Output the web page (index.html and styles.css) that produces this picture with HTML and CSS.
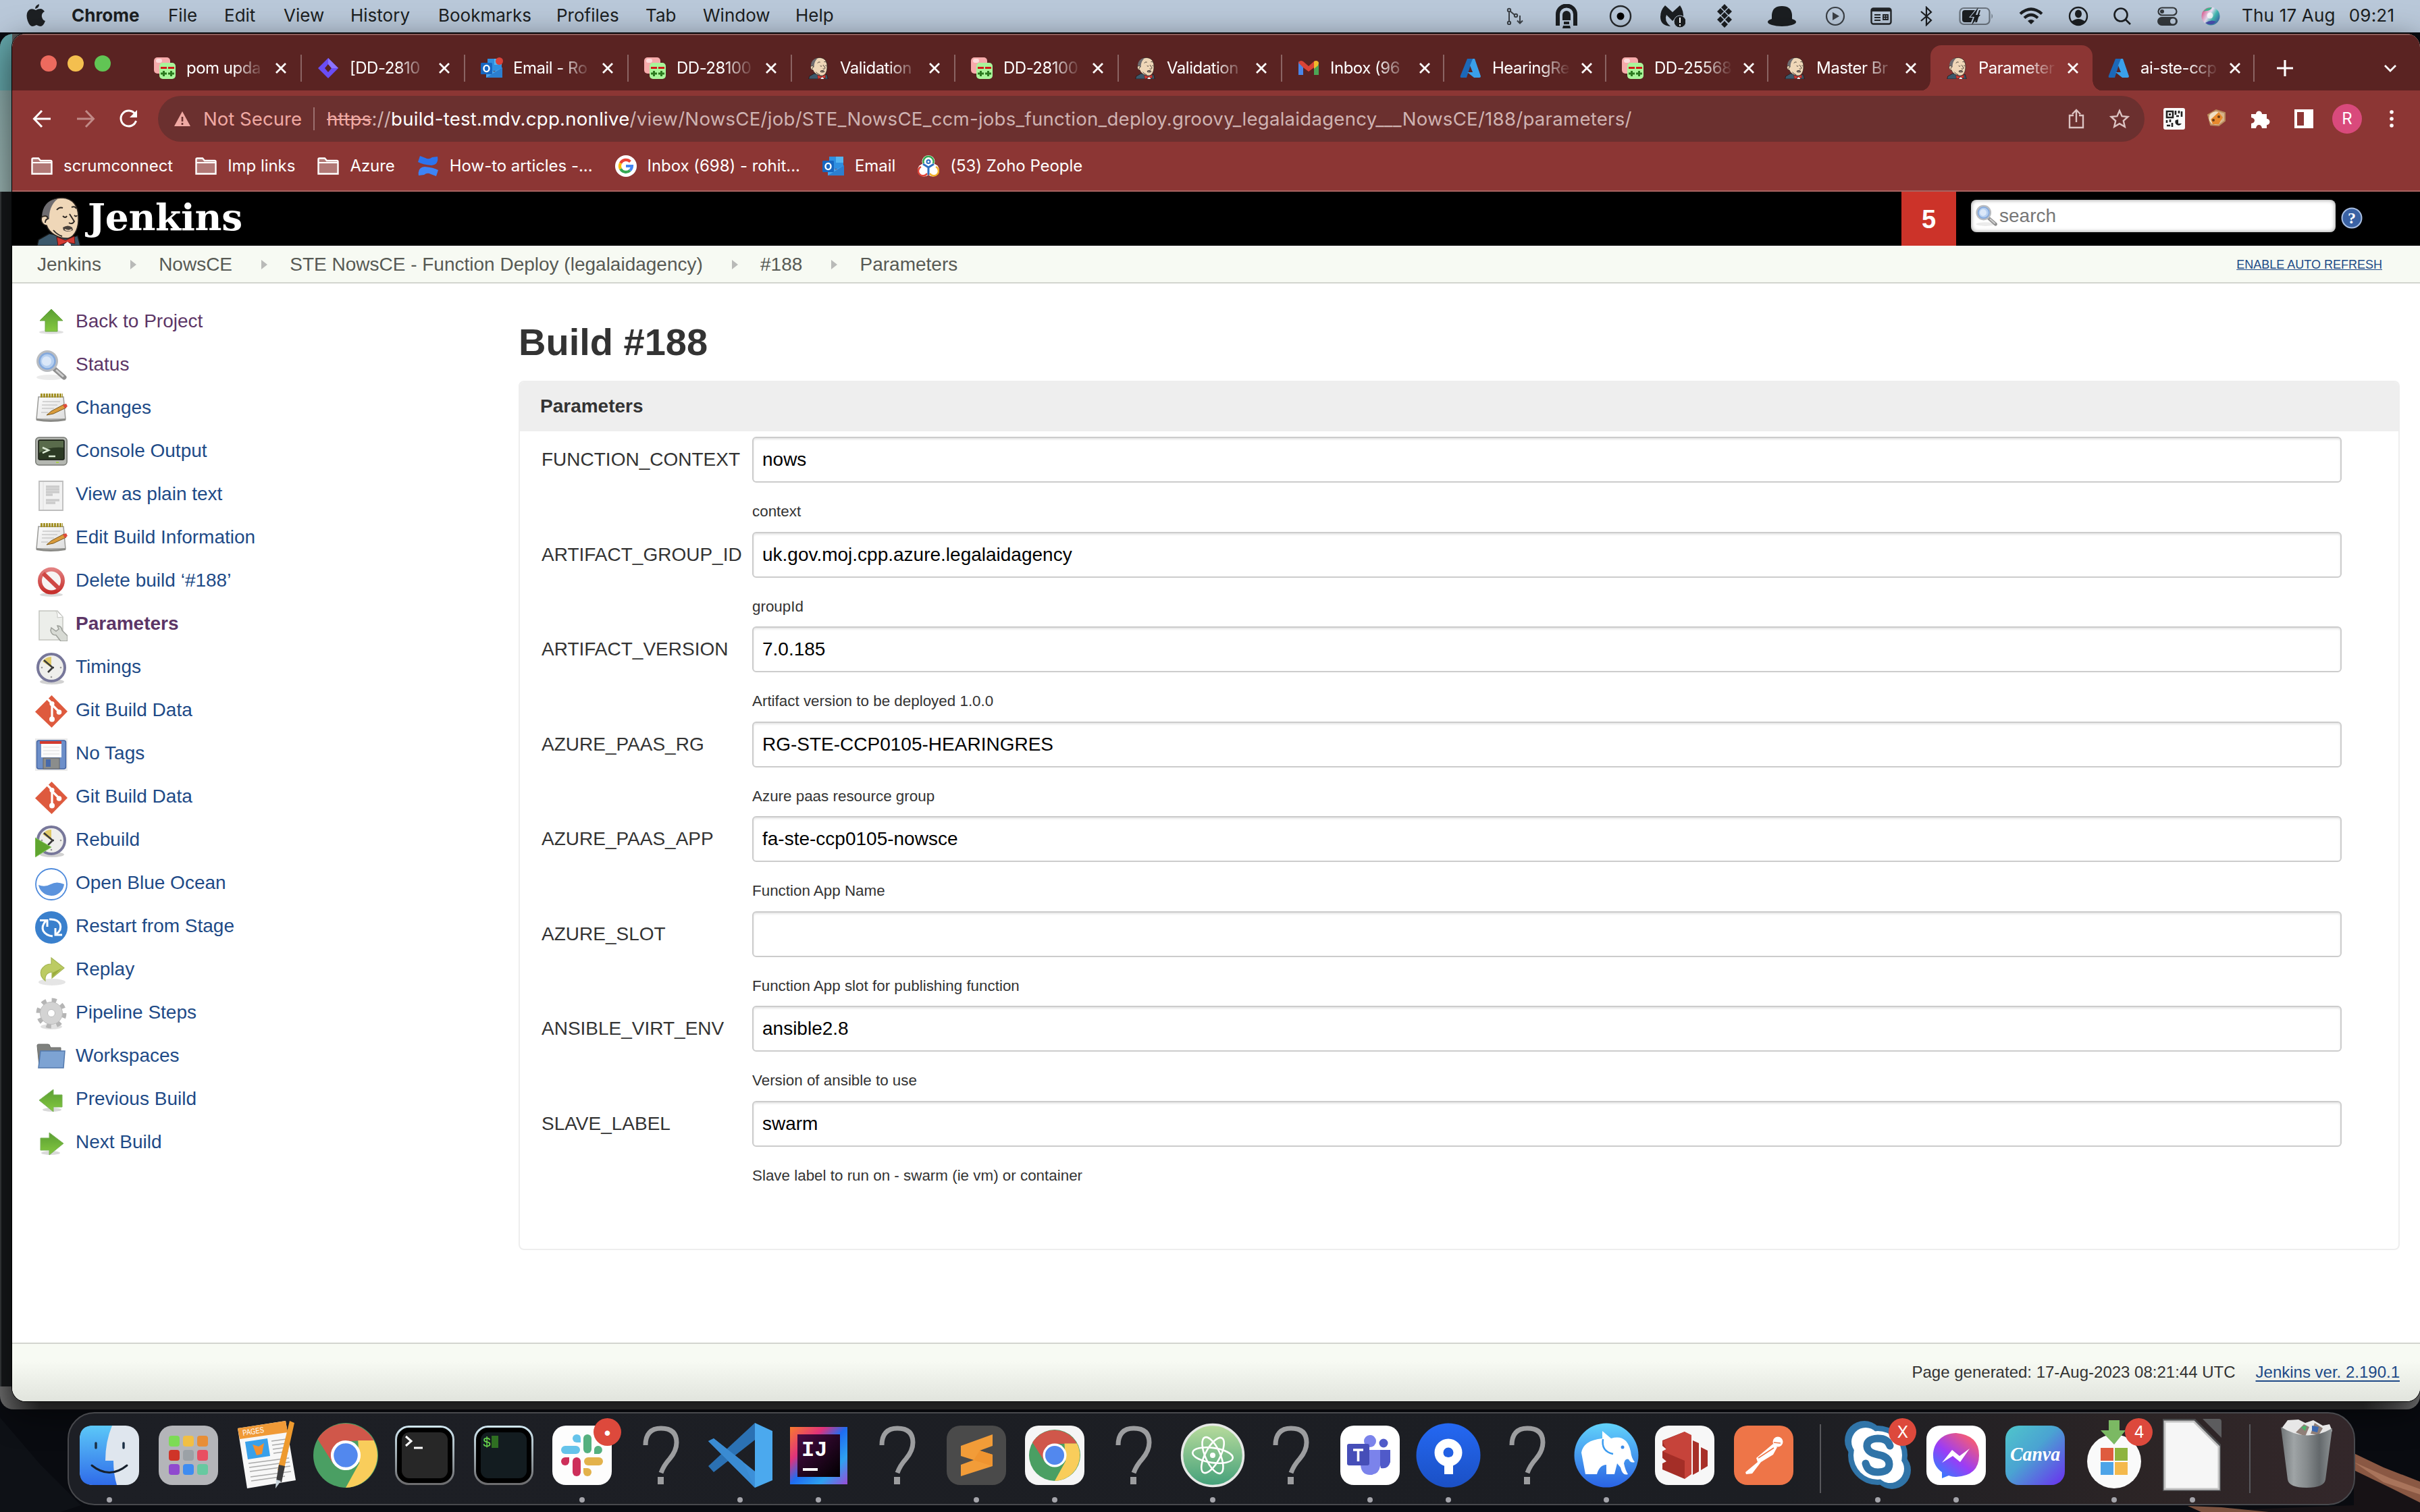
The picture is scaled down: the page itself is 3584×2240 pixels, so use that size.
FILE: index.html
```html
<!DOCTYPE html>
<html lang="en">
<head>
<meta charset="utf-8">
<title>Parameters [Jenkins]</title>
<link rel="stylesheet" href="styles.css">
</head>
<body>
<svg class="defs" aria-hidden="true">
  <defs>
    <linearGradient id="gGreen" x1="0" y1="0" x2="0" y2="1"><stop offset="0" stop-color="#5a9e33"/><stop offset="1" stop-color="#85c940"/></linearGradient>
    <linearGradient id="gPaper" x1="0" y1="0" x2="1" y2="1"><stop offset="0" stop-color="#fbfbfb"/><stop offset="1" stop-color="#dedede"/></linearGradient>
    <linearGradient id="gRed" x1="0" y1="0" x2="0" y2="1"><stop offset="0" stop-color="#e27f7f"/><stop offset="1" stop-color="#c62f2c"/></linearGradient>
    <linearGradient id="gFinder" x1="0" y1="0" x2="0" y2="1"><stop offset="0" stop-color="#5cc8f8"/><stop offset="1" stop-color="#2f6be9"/></linearGradient>
    <linearGradient id="gSiri" x1="0" y1=".2" x2="1" y2=".8"><stop offset="0" stop-color="#d9467f"/><stop offset=".4" stop-color="#e9dff5"/><stop offset=".65" stop-color="#41b9b0"/><stop offset="1" stop-color="#3b58a8"/></linearGradient>
    <linearGradient id="gIJ" x1="0" y1="0" x2="1" y2="1"><stop offset="0" stop-color="#f97b2e"/><stop offset=".3" stop-color="#e0327b"/><stop offset=".5" stop-color="#1e6df2"/><stop offset=".75" stop-color="#2ea1f0"/><stop offset="1" stop-color="#9a4cd6"/></linearGradient>
    <linearGradient id="gIJin" x1="0" y1="0" x2="1" y2="1"><stop offset="0" stop-color="#4a0b45"/><stop offset="1" stop-color="#000"/></linearGradient>
    <linearGradient id="gAtom" x1="0" y1="0" x2="0" y2="1"><stop offset="0" stop-color="#b9dc9c"/><stop offset="1" stop-color="#43a07a"/></linearGradient>
    <linearGradient id="gSource" x1="0" y1="0" x2="0" y2="1"><stop offset="0" stop-color="#2468f2"/><stop offset="1" stop-color="#1b50c4"/></linearGradient>
    <linearGradient id="gEle" x1="0" y1="0" x2="0" y2="1"><stop offset="0" stop-color="#62d3fb"/><stop offset="1" stop-color="#2a63e4"/></linearGradient>
    <linearGradient id="gMsg" x1="0" y1="1" x2=".8" y2="0"><stop offset="0" stop-color="#1a8cff"/><stop offset=".5" stop-color="#9b3cf6"/><stop offset="1" stop-color="#ff5f68"/></linearGradient>
    <linearGradient id="gCanva" x1="0" y1="0" x2="1" y2="1"><stop offset="0" stop-color="#4fc6cb"/><stop offset=".45" stop-color="#4aa3d2"/><stop offset="1" stop-color="#6b2ef0"/></linearGradient>
    <linearGradient id="gTrash" x1="0" y1="0" x2="1" y2="0"><stop offset="0" stop-color="#707577"/><stop offset=".25" stop-color="#9fa4a6"/><stop offset=".5" stop-color="#868b8d"/><stop offset=".75" stop-color="#63686b"/><stop offset="1" stop-color="#8d9294"/></linearGradient>
    <linearGradient id="gBezel" x1="0" y1="0" x2="0" y2="1"><stop offset="0" stop-color="#cfe6f0"/><stop offset="1" stop-color="#6d6d6f"/></linearGradient>

    <symbol id="butler" viewBox="0 0 64 72">
      <path d="M0 72 2 63 18 54 50 60 60 57 64 72Z" fill="#3c586b" stroke="#141414" stroke-width="1.5"/>
      <path d="M9 25C10 10 22 1 37 1 54 2 61 14 61 29 62 44 57 58 46 61 33 62 18 54 14 42 7 41 4 33 8 28Z" fill="#efd7b8" stroke="#2a2420" stroke-width="1.600"/>
      <path d="M28 3C15 5 8 14 7 28L13 27 18 33C17 22 21 10 30 3Z" fill="#6e6c70"/>
      <path d="M8 29q7-3 8 3q-4 1-4 6M29 19q4-5 9-3M51 15q5-2 7 2M38 28q4 4 6 0M55 27q3 3 4 0M48 25l7 11q-3 5-8 2M24 49q6 7 13 9" fill="none" stroke="#2d2723" stroke-width="1.900"/>
      <path d="M38 45q8-5 14 0l1 4q-8 4-14 0Z" fill="#4a423d"/>
      <path d="M41 48q6 3 10 0" fill="none" stroke="#efd7b8" stroke-width="1.600"/>
      <path d="M29 59 42 64 55 58 56 69 44 67 31 72Z" fill="#d33a32" stroke="#5e1410" stroke-width="1"/>
      <path d="M40 70l5-4 5 4v2H40Z" fill="#f5f5f5"/>
    </symbol>
    <symbol id="diffs" viewBox="0 0 32 32">
      <rect x="0" y="0" width="24" height="24" rx="5" fill="#f6abab"/><rect x="3" y="2" width="9" height="6" rx="3" fill="#fcdada"/>
      <rect x="8" y="8" width="24" height="24" rx="5" fill="#a9f59a"/>
      <path d="M10 15.500h9M21 15.500h9" stroke="#d11a1a" stroke-width="3"/><path d="M10 24h9M14.500 20v8M21 24h9M25.500 20v8" stroke="#2b7a1f" stroke-width="3"/>
    </symbol>
    <symbol id="diamond" viewBox="0 0 32 32"><path d="M16 1 31 16 16 31 1 16Z" fill="#6a4df5"/><path d="M16 10 21 16 16 22 11 16Z" fill="#5a2222"/><path d="M16 1 31 16H21L16 10Z" fill="#8b73ff"/></symbol>
    <symbol id="outlook" viewBox="0 0 32 32"><path d="M10 2h21v18H10Z" fill="#2f8fe0"/><path d="M20 2h11v9H20Z" fill="#54b4f0"/><path d="M8 16l12 5 12-6v15H8Z" fill="#4aa3ea"/><path d="M8 30l24-15v15Z" fill="#2c7fd0"/><rect x="0" y="8" width="17" height="17" rx="1.500" fill="#1766c0"/><ellipse cx="8.500" cy="16.500" rx="4" ry="4.600" fill="none" stroke="#fff" stroke-width="2.400"/></symbol>
    <symbol id="gmail" viewBox="0 0 32 32"><path d="M1 6v20h7V13Z" fill="#4a86e8"/><path d="M31 6v20h-7V13Z" fill="#4ca655"/><path d="M1 8q2-5 7-2l8 7 8-7q5-3 7 2l-7 7-8 6-8-6Z" fill="#dc4437"/><path d="M24 6q5-3 7 2l-1 4-6 5Z" fill="#f2b92b"/></symbol>
    <symbol id="azure" viewBox="0 0 32 32"><path d="M11 2h8L10 30H2q-2 0-1-3Z" fill="#1c68b8"/><path d="M19 2h3l9 26q0 2-2 2h-8l-10-8h8L15 12Z" fill="#3aa0ea"/></symbol>
    <symbol id="x" viewBox="0 0 20 20"><path d="M3 3 17 17M17 3 3 17" stroke="#fff" stroke-width="2.800"/></symbol>
    <symbol id="folder" viewBox="0 0 32 26"><path d="M1.500 24.500V3q0-1.500 1.500-1.500h8l3 3.500h15q1.500 0 1.500 1.500v18Z" fill="#b17876" stroke="#fff" stroke-width="2.400"/><path d="M1 8h30" stroke="#fff" stroke-width="2.200"/></symbol>
    <symbol id="confluence" viewBox="0 0 32 32"><path d="M4 1 12 4Q17 7 22 3L30 2q2 12-9 13Q8 14 1 10Z" fill="#2c74ee"/><path d="M28 31l-8-3Q15 25 10 29l-8 1Q0 18 11 17q13 1 20 5Z" fill="#3e84f5"/></symbol>
    <symbol id="google" viewBox="0 0 32 32"><circle cx="16" cy="16" r="16" fill="#fff"/><g fill="none" stroke-width="4.200"><path d="M22.500 9.500A9 9 0 0 0 8 11.800" stroke="#ea4335"/><path d="M8 11.800A9 9 0 0 0 8 20.200" stroke="#fbbc05"/><path d="M8 20.200A9 9 0 0 0 22 22.500" stroke="#34a853"/><path d="M22 22.500A9 9 0 0 0 25 16H16" stroke="#4285f4"/></g></symbol>
    <symbol id="zoho" viewBox="0 0 32 32"><circle cx="16" cy="9.500" r="9.500" fill="#fff"/><circle cx="9.500" cy="22" r="9.500" fill="#fff"/><circle cx="22.500" cy="22" r="9.500" fill="#fff"/><path d="M9 12a7.500 7.500 0 1 1 14 0" fill="none" stroke="#35a853" stroke-width="2.500"/><path d="M5 17a7 7 0 1 0 9 10" fill="none" stroke="#e04438" stroke-width="2.500"/><path d="M27 17a7 7 0 1 1-9 10" fill="none" stroke="#f2b02b" stroke-width="2.500"/><circle cx="16" cy="9.500" r="2.500" fill="none" stroke="#2c6fc0" stroke-width="2"/><path d="M8 13l8 5 8-5M16 18v11" fill="none" stroke="#2c6fc0" stroke-width="3"/></symbol>

    <symbol id="upArrow" viewBox="0 0 48 48"><ellipse cx="24" cy="38" rx="18" ry="3" fill="#000" opacity=".12"/><path d="M24 4 41 21H33V37H15V21H7Z" fill="url(#gGreen)" stroke="#6aa544" stroke-width="1"/></symbol>
    <symbol id="leftArrow" viewBox="0 0 48 48"><ellipse cx="25" cy="38" rx="14" ry="3" fill="#000" opacity=".15"/><path d="M6 24 27 8V16H40V34H27V41Z" fill="url(#gGreen)" stroke="#7bb359" stroke-width="1"/></symbol>
    <symbol id="rightArrow" viewBox="0 0 48 48"><ellipse cx="23" cy="38" rx="14" ry="3" fill="#000" opacity=".15"/><path d="M42 24 21 8V16H8V34H21V41Z" fill="url(#gGreen)" stroke="#7bb359" stroke-width="1"/></symbol>
    <symbol id="loupe" viewBox="0 0 48 48"><ellipse cx="22" cy="41" rx="20" ry="4" fill="#000" opacity=".08"/><path d="M28 28 43 41" stroke="#8f8f8f" stroke-width="7" stroke-linecap="round"/><path d="M31 30 42 40" stroke="#cfcfcf" stroke-width="3"/><circle cx="18" cy="17" r="14" fill="#b5cff0" stroke="#b9bcc0" stroke-width="4"/><circle cx="18" cy="17" r="11.500" fill="none" stroke="#84a9dd" stroke-width="2.500"/><circle cx="17" cy="17" r="7" fill="#dbe8f9"/></symbol>
    <symbol id="notepad" viewBox="0 0 48 48"><path d="M5 6h37l3 33H2Z" fill="url(#gPaper)" stroke="#9b9b98" stroke-width="1.500"/><path d="M2 39.500q21 4 43 0" stroke="#8a8a86" stroke-width="3" fill="none"/><path d="M8 4h33" stroke="#a39128" stroke-width="6" stroke-dasharray="3 1"/><path d="M11 13h26M10 18h23M10 23h18M9 29h10" stroke="#c9c9c9" stroke-width="1.500"/><path d="M17 33 24 27 43 17 46 22 27 31Z" fill="#d99b3c" stroke="#7a5a22" stroke-width="1"/><path d="M41 18l5-2 2 4-4 3Z" fill="#de4b3d"/></symbol>
    <symbol id="terminal" viewBox="0 0 48 48"><rect x=".8" y="2" width="46.400" height="41" rx="5" fill="#b4b7b1" stroke="#777a75" stroke-width="1.500"/><rect x="5" y="6" width="38" height="29" rx="2" fill="#2c3a24" stroke="#141a10" stroke-width="1.500"/><path d="M6 7h36v10Q20 15 6 25Z" fill="#596b4b"/><path d="M11 17l9 4-9 4M20 30h10" fill="none" stroke="#dbe9d3" stroke-width="2.500"/><rect x="31" y="38" width="4" height="2" fill="#a8d04c"/></symbol>
    <symbol id="plain" viewBox="0 0 48 48"><path d="M6 3h35v43H6Z" fill="#f1f1f1" stroke="#bdbdbd" stroke-width="1.800"/><path d="M16 11h20M16 15h20M16 19h20M16 23h10M16 31h20M16 35h14" stroke="#cbcbcb" stroke-width="3.400"/><path d="M12 4v41" stroke="#dedede"/></symbol>
    <symbol id="stop" viewBox="0 0 48 48"><ellipse cx="24" cy="43" rx="17" ry="3" fill="#000" opacity=".15"/><circle cx="24" cy="22.500" r="17" fill="#f7f3f3" stroke="url(#gRed)" stroke-width="6"/><path d="M12 11.500 36 34.500" stroke="#cf4744" stroke-width="6"/></symbol>
    <symbol id="wrenchDoc" viewBox="0 0 48 48"><path d="M6 3h27l8 9v34H6Z" fill="#eceeea" stroke="#c3c5c0" stroke-width="1.500"/><path d="M30 3q4 3 3 10l8-1" fill="#fff" stroke="#c3c5c0"/><path d="M24 28l7 5 4-3-2-5q6 0 7 7l8 8v8H38l-7-9q-7 0-8-7Z" fill="#d7dad4" stroke="#9c9f99" stroke-width="1.500"/></symbol>
    <symbol id="clock" viewBox="0 0 48 48"><ellipse cx="25" cy="44" rx="18" ry="4" fill="#000" opacity=".18"/><circle cx="24" cy="23" r="20" fill="#efefec" stroke="#77779a" stroke-width="4"/><path d="M24 23V7Q16 7 11 14Z" fill="#e0ca68"/><path d="M13 12 26 23 19 30M24 23 28 23" fill="none" stroke="#3b3b3b" stroke-width="2.600"/><circle cx="38" cy="23" r="1.300" fill="#999"/><circle cx="24" cy="37" r="1.300" fill="#999"/><circle cx="10" cy="23" r="1.300" fill="#999"/></symbol>
    <symbol id="git" viewBox="0 0 48 48"><path d="M24.500 0 48 24 24.500 48 0 24.500Z" fill="#de5a3e"/><path d="M17 4 25 12V36M25 14 36 25" fill="none" stroke="#fff" stroke-width="3.200"/><circle cx="25" cy="12.500" r="3.600" fill="#fff"/><circle cx="25" cy="35.500" r="4" fill="#fff"/><circle cx="35.500" cy="25" r="3.800" fill="#fff"/></symbol>
    <symbol id="floppy" viewBox="0 0 48 48"><rect width="48" height="48" fill="#ebebeb"/><rect x="2.500" y="3" width="43" height="42" rx="3" fill="#6d8fc9" stroke="#4565a3" stroke-width="1.500"/><rect x="9" y="4" width="30" height="24" fill="#fbfbfb"/><rect x="7" y="4" width="32" height="4" fill="#d33a2f"/><path d="M12 13h24M12 18h24M12 23h24" stroke="#ddd"/><rect x="12" y="29" width="24" height="16" fill="#8b8d8c" stroke="#666"/><rect x="16" y="31" width="7" height="11" fill="#486aa9"/></symbol>
    <symbol id="wave" viewBox="0 0 48 48"><circle cx="24" cy="24" r="23" fill="#fff" stroke="#4f8bdc" stroke-width="1.800"/><path d="M5 25Q14 29 23 24T43 24A19.200 19.200 0 0 1 5 25Z" fill="#5b93dd"/></symbol>
    <symbol id="restart" viewBox="0 0 48 48"><circle cx="24" cy="24" r="24" fill="#3a80cd"/><g fill="none" stroke="#fff" stroke-width="3"><path d="M16 14Q9 22 12 29 16 36 26 37M31 34Q40 28 37 19 33 11 21 12"/><path d="M7 13.500H18V23M40 35H30V25"/></g></symbol>
    <symbol id="replay" viewBox="0 0 48 48"><ellipse cx="25" cy="41" rx="20" ry="5" fill="#000" opacity=".1"/><path d="M15 39Q6 32 9 23 14 14 24 14V5L43 20 25 35V26Q14 27 15 39Z" fill="#bccb63" stroke="#a4b553" stroke-width="1.200"/><path d="M26 27 40 20 25 34Z" fill="#9bad3d"/></symbol>
    <symbol id="gear" viewBox="0 0 48 48"><ellipse cx="24" cy="43" rx="16" ry="4" fill="#000" opacity=".12"/><circle cx="24" cy="23" r="19" fill="none" stroke="#b5b5b5" stroke-width="7" stroke-dasharray="7 7.920"/><circle cx="24" cy="23" r="11" fill="none" stroke="#d3d3d3" stroke-width="11"/><circle cx="24" cy="23" r="16.500" fill="none" stroke="#bdbdbd" stroke-width="1"/><circle cx="24" cy="23" r="5.500" fill="#fff" stroke="#b9b9b9"/></symbol>
    <symbol id="blueFolder" viewBox="0 0 48 48"><path d="M3 7q0-2 2-2h14q3 0 3 3l1 2h15v27H6Z" fill="#7f817e" stroke="#6b6d6a"/><path d="M8 15h36l-2 25H5Z" fill="#7da3d3" stroke="#5379ad" stroke-width="1.500"/></symbol>
    <symbol id="quest" viewBox="0 0 112 112"><path d="M33 42Q33 17 56 17 79 17 79 38 79 50 69 62 60 72 56 83" transform="translate(0 -1)" fill="none" stroke="#9c9d9f" stroke-width="7"/><rect x="51" y="88" width="9" height="11" fill="#9c9d9f"/></symbol>
    <symbol id="chromeLogo" viewBox="0 0 100 100"><circle cx="50" cy="50" r="50" fill="#4a9f63"/><path d="M50 50 6.700 25A50 50 0 0 1 93.300 27L50 28Z" fill="#d0574a"/><path d="M93.300 27A50 50 0 0 1 50 100L71 62 69 27Z" fill="#f9cd5b"/><path d="M6.700 25 30 62 50 28Z" fill="#d0574a"/><circle cx="50" cy="50" r="23" fill="#fff"/><circle cx="50" cy="50" r="18.500" fill="#5288ee"/></symbol>
  </defs>
</svg>

<div class="desktop">
  <svg class="wallpaper" viewBox="0 0 3584 200" preserveAspectRatio="none"><path d="M3486 113 3530 134 3584 155V200H3300L3330 196 3486 190Z" fill="#171215"/><path d="M3486 113 3530 134 3584 155V186L3540 164 3486 138Z" fill="#8a5843"/><path d="M3486 126 3540 150 3584 166V174L3530 156Z" fill="#a9745b"/><path d="M3240 191 3290 193 3360 200H3260Z" fill="#7d5340"/><path d="M0 60 60 130 120 190 90 200H0Z" fill="#0e1116"/></svg>

  <header class="menubar">
    <svg class="apple" viewBox="0 0 28 34"><path d="M19 1q0 6-6 7 0-5 6-7ZM14 10q3-2 7-2 3 0 6 4-5 3-4 8 1 5 5 6-3 8-7 8-2 0-6-2-4 2-6 2-4 0-7-8-4-12 3-17 4-2 9 1Z" fill="#1d2023"/></svg>
    <nav class="menus"><b>Chrome</b><span>File</span><span>Edit</span><span>View</span><span>History</span><span>Bookmarks</span><span>Profiles</span><span>Tab</span><span>Window</span><span>Help</span></nav>
    <div class="status">
      <svg width="26" height="26" viewBox="0 0 26 26" fill="none" stroke="#3b4046" stroke-width="2"><circle cx="4" cy="4" r="2.200"/><circle cx="4" cy="23" r="2.200"/><circle cx="14" cy="12" r="2.200"/><path d="M4 6v15M5.500 5.500 12 11M20 12v12M16 19.500l4 4 4-4"/></svg>
      <svg width="32" height="36" viewBox="0 0 32 36"><path d="M3 32V15a13 12.500 0 0 1 26 0V32" fill="none" stroke="#1b1e21" stroke-width="6"/><path d="M10 24V16a6 6 0 0 1 12 0v8ZM12 26h8v4h-8ZM11 32h10l1 4H10Z" fill="#1b1e21"/></svg>
      <svg width="34" height="34" viewBox="0 0 34 34"><circle cx="17" cy="17" r="15" fill="none" stroke="#26292c" stroke-width="2.400"/><circle cx="17" cy="17" r="5.500" fill="#000"/></svg>
      <svg width="38" height="36" viewBox="0 0 38 36"><path d="M8 2 19 12 30 2Q36 10 35 22L26 18 19 25 10 16Q6 25 16 33 1 32 1 19 1 9 8 2Z" fill="#1b1e21"/><circle cx="30" cy="26" r="9" fill="#1b1e21" stroke="#bac8d9"/><path d="M30 20v8M30 30v2.500" stroke="#fff" stroke-width="2"/></svg>
      <svg width="22" height="36" viewBox="0 0 22 36" fill="#1b1e21"><path d="M11 0l5 5-5 5-5-5ZM5 6l5 5-5 5-5-5ZM17 6l5 5-5 5-5-5ZM11 12l5 5-5 5-5-5ZM5 18l5 5-5 5-5-5ZM17 18l5 5-5 5-5-5ZM11 25l5 5-5 5-5-5Z"/></svg>
      <svg width="42" height="32" viewBox="0 0 42 32" fill="#1b1e21"><path d="M6 25V14Q7 1 21 1T36 14V25Z"/><ellipse cx="21" cy="24.500" rx="21" ry="6.500"/></svg>
      <svg width="30" height="30" viewBox="0 0 30 30"><circle cx="15" cy="15" r="13" fill="none" stroke="#3b4046" stroke-width="2.200"/><path d="M11 9l10 6-10 6Z" fill="#3b4046"/></svg>
      <svg width="32" height="26" viewBox="0 0 32 26"><rect x="1.500" y="1.500" width="29" height="23" rx="3" fill="none" stroke="#222528" stroke-width="2.400"/><path d="M2 2h28v4H2Z" fill="#222528"/><path d="M6 11h9M6 15h9M6 19h9M19 11h7v7h-7ZM22.500 10v9M18 14.500h9" stroke="#222528" stroke-width="1.800" fill="none"/></svg>
      <svg width="20" height="30" viewBox="0 0 20 30"><path d="M2 8 17 21 10 28V2L17 9 2 22" fill="none" stroke="#1b1e21" stroke-width="2.200"/></svg>
      <svg width="52" height="28" viewBox="0 0 52 28"><rect x="1.500" y="2" width="44" height="24" rx="6" fill="none" stroke="#6b747e" stroke-width="2.200"/><path d="M48.500 10q3 4 0 8" fill="#6b747e"/><path d="M5 9q0-4 4-4h15L15 16h6l-3 7H9q-4 0-4-4Z" fill="#1b1e21"/><path d="M29 1 17 15h6l-4 12L32 12h-7Z" fill="#1b1e21"/><path d="M30 5h2L27 23h-3" fill="#1b1e21"/></svg>
      <svg width="36" height="26" viewBox="0 0 36 26" fill="none" stroke="#1b1e21" stroke-width="4.200"><path d="M2 9.500q16-14 32 0M8 15.500q10-9 20 0"/><path d="M13 20q5-4 10 0l-5 5Z" fill="#1b1e21" stroke="none"/></svg>
      <svg width="30" height="30" viewBox="0 0 30 30"><circle cx="15" cy="15" r="13" fill="none" stroke="#1b1e21" stroke-width="2.400"/><ellipse cx="15" cy="11.500" rx="5" ry="6" fill="#1b1e21"/><path d="M5 23q10-8 20 0-9 9-20 0Z" fill="#1b1e21"/></svg>
      <svg width="28" height="28" viewBox="0 0 28 28" fill="none" stroke="#1b1e21" stroke-width="2.600"><circle cx="12" cy="12" r="9.500"/><path d="M19 19l7 7"/></svg>
      <svg width="30" height="28" viewBox="0 0 30 28"><rect x="1.500" y="1.500" width="27" height="11" rx="5.500" fill="none" stroke="#34383c" stroke-width="2.200"/><circle cx="7" cy="7" r="3" fill="#34383c"/><rect x="0" y="15" width="30" height="13" rx="6.500" fill="#34383c"/><circle cx="23" cy="21.500" r="4" fill="#bac8d9"/></svg>
      <svg width="28" height="28" viewBox="0 0 28 28"><circle cx="14" cy="14" r="13.500" fill="url(#gSiri)"/><path d="M3 7Q8 0 16 1q-2 5-9 5Z" fill="#3fb48e"/><circle cx="13" cy="13" r="4.500" fill="#fff" opacity=".8"/><path d="M6 24q8-6 16-2-7 8-16 2Z" fill="#4a4fb0"/></svg>
    </div>
    <time class="clock"><span>Thu 17 Aug</span><span>09:21</span></time>
  </header>

  <div class="backwindow"><i class="teal"></i><i class="pale"></i><i class="rest"></i></div>

  <main class="window">
    <div class="tabstrip">
      <div class="lights"><i class="red"></i><i class="yellow"></i><i class="green"></i></div>
      <div class="tab wide"><svg><use href="#diffs"/></svg><span>pom upda</span><svg class="x"><use href="#x"/></svg></div>
      <div class="tab wide"><svg><use href="#diamond"/></svg><span>[DD-2810</span><svg class="x"><use href="#x"/></svg></div>
      <div class="tab wide"><svg><use href="#outlook"/></svg><span>Email - Ro</span><svg class="x"><use href="#x"/></svg><i class="dot"></i></div>
      <div class="tab wide"><svg><use href="#diffs"/></svg><span>DD-28100</span><svg class="x"><use href="#x"/></svg></div>
      <div class="tab wide"><svg><use href="#butler"/></svg><span>Validation</span><svg class="x"><use href="#x"/></svg></div>
      <div class="tab wide"><svg><use href="#diffs"/></svg><span>DD-28100</span><svg class="x"><use href="#x"/></svg></div>
      <div class="tab wide"><svg><use href="#butler"/></svg><span>Validation</span><svg class="x"><use href="#x"/></svg></div>
      <div class="tab"><svg><use href="#gmail"/></svg><span>Inbox (96</span><svg class="x"><use href="#x"/></svg></div>
      <div class="tab"><svg><use href="#azure"/></svg><span>HearingRe</span><svg class="x"><use href="#x"/></svg></div>
      <div class="tab"><svg><use href="#diffs"/></svg><span>DD-25568</span><svg class="x"><use href="#x"/></svg></div>
      <div class="tab bare"><svg><use href="#butler"/></svg><span>Master Br</span><svg class="x"><use href="#x"/></svg></div>
      <div class="tab active"><svg><use href="#butler"/></svg><span>Parameter</span><svg class="x"><use href="#x"/></svg></div>
      <div class="tab"><svg><use href="#azure"/></svg><span>ai-ste-ccp</span><svg class="x"><use href="#x"/></svg></div>
      <svg class="plus" viewBox="0 0 26 26"><path d="M13 1v24M1 13h24" stroke="#fff" stroke-width="3.200"/></svg>
      <svg class="chev" viewBox="0 0 20 14"><path d="M2 3l8 8 8-8" fill="none" stroke="#fff" stroke-width="2.800"/></svg>
    </div>

    <div class="toolbar">
      <svg class="nav" viewBox="0 0 28 28"><path d="M27 14H3M14 2 2.500 14 14 26" fill="none" stroke="#fff" stroke-width="3"/></svg>
      <svg class="nav" viewBox="0 0 28 28"><path d="M1 14H25M14 2 25.500 14 14 26" fill="none" stroke="#c08a87" stroke-width="3"/></svg>
      <svg class="nav reload" viewBox="0 0 28 28"><path d="M24 7A11.500 11.500 0 1 0 25.500 17" fill="none" stroke="#fff" stroke-width="3"/><path d="M27 1V12H16Z" fill="#fff"/></svg>
      <div class="omnibox">
        <svg class="warn" viewBox="0 0 24 22"><path d="M12 0 24 22H0Z" fill="#f0a9a3"/><path d="M12 8v7M12 17v3" stroke="#6a302f" stroke-width="2.600"/></svg>
        <span class="insecure">Not Secure</span>
        <span class="url"><s>https</s><em>://</em><b>build-test.mdv.cpp.nonlive</b>/view/NowsCE/job/STE_NowsCE_ccm-jobs_function_deploy.groovy_legalaidagency___NowsCE/188/parameters/</span>
        <svg class="share" viewBox="0 0 24 30"><path d="M8 10H2v18h20V10h-6M12 20V2M6 8l6-6 6 6" fill="none" stroke="#dcc3c2" stroke-width="2.400"/></svg>
        <svg class="star" viewBox="0 0 30 30"><path d="M15 3l3.600 8.200 8.900.8-6.700 6 2 8.700-7.800-4.600-7.800 4.600 2-8.700-6.700-6 8.900-.8Z" fill="none" stroke="#dcc3c2" stroke-width="2.400"/></svg>
      </div>
      <div class="extensions">
        <svg viewBox="0 0 32 32"><rect width="32" height="32" rx="3" fill="#fafafa"/><path d="M5 5h9v9H5ZM18 4v6M23 4v4M27 5v8M19 12h4M5 18v4M10 17v4M13 22v6M5 26h5" fill="none" stroke="#222" stroke-width="2.600"/><rect x="8" y="8" width="3" height="3" fill="#222"/><path d="M18 18a5 5 0 0 0 9 5h-5v-6Z" fill="#222"/></svg>
        <svg viewBox="0 0 32 32"><path d="M4 10 16 3 29 7 29 19 20 26 8 25Z" fill="#d8b48a" stroke="#b98a5c" stroke-width="2"/><circle cx="15" cy="15" r="9.500" fill="#f0dfc4"/><path d="M8 17 20 6l6 8-6 10-9 0Z" fill="#e78a2e"/><circle cx="12" cy="18" r="2" fill="#6a3c18"/><circle cx="20" cy="13" r="2" fill="#6a3c18"/></svg>
        <svg viewBox="0 0 32 32"><path d="M2 9h7a4.500 4.500 0 1 1 9 0h7v7a4.500 4.500 0 1 1 0 9v5h-7q-1-5-4.500-5T9 30H2v-7q5-1 5-4.500T2 14Z" fill="#fff"/></svg>
        <svg viewBox="0 0 32 32"><path d="M2 2h28v28H2ZM6 6v20h10V6Z" fill="#fff" fill-rule="evenodd"/></svg>
        <span class="avatar">R</span>
        <svg viewBox="0 0 32 32"><circle cx="16" cy="6" r="2.800" fill="#fff"/><circle cx="16" cy="16" r="2.800" fill="#fff"/><circle cx="16" cy="26" r="2.800" fill="#fff"/></svg>
      </div>
    </div>

    <div class="bookmarks">
      <a><svg class="f"><use href="#folder"/></svg><span>scrumconnect</span></a>
      <a><svg class="f"><use href="#folder"/></svg><span>Imp links</span></a>
      <a><svg class="f"><use href="#folder"/></svg><span>Azure</span></a>
      <a><svg><use href="#confluence"/></svg><span>How-to articles -...</span></a>
      <a><svg><use href="#google"/></svg><span>Inbox (698) - rohit...</span></a>
      <a><svg><use href="#outlook"/></svg><span>Email</span></a>
      <a><svg><use href="#zoho"/></svg><span>(53) Zoho People</span></a>
    </div>

    <div class="jenkins-head">
      <svg class="logo"><use href="#butler"/></svg><span class="brand">Jenkins</span>
      <span class="alerts">5</span>
      <div class="search"><svg><use href="#loupe"/></svg><span>search</span></div>
      <svg class="help" viewBox="0 0 32 32"><circle cx="16" cy="16" r="14.500" fill="#3a62a4" stroke="#a9bfe3" stroke-width="2"/><text x="16" y="24" text-anchor="middle" font-family="Liberation Serif, serif" font-weight="700" font-size="24" fill="#fff">?</text></svg>
    </div>

    <div class="crumbs">
      <span>Jenkins</span><i></i><span>NowsCE</span><i></i><span>STE NowsCE - Function Deploy (legalaidagency)</span><i></i><span>#188</span><i></i><span>Parameters</span>
      <a>ENABLE AUTO REFRESH</a>
    </div>

    <div class="page">
      <ul class="tasks">
        <li class="seen"><svg><use href="#upArrow"/></svg><a>Back to Project</a></li>
        <li class="seen"><svg><use href="#loupe"/></svg><a>Status</a></li>
        <li><svg><use href="#notepad"/></svg><a>Changes</a></li>
        <li><svg><use href="#terminal"/></svg><a>Console Output</a></li>
        <li><svg><use href="#plain"/></svg><a>View as plain text</a></li>
        <li><svg><use href="#notepad"/></svg><a>Edit Build Information</a></li>
        <li><svg><use href="#stop"/></svg><a>Delete build ‘#188’</a></li>
        <li class="seen current"><svg><use href="#wrenchDoc"/></svg><a>Parameters</a></li>
        <li><svg><use href="#clock"/></svg><a>Timings</a></li>
        <li><svg><use href="#git"/></svg><a>Git Build Data</a></li>
        <li><svg><use href="#floppy"/></svg><a>No Tags</a></li>
        <li><svg><use href="#git"/></svg><a>Git Build Data</a></li>
        <li><svg viewBox="0 0 48 48"><use href="#clock"/><path d="M0 19 24 33 0 48Z" fill="#5fa52f" stroke="#8bc766"/></svg><a>Rebuild</a></li>
        <li><svg><use href="#wave"/></svg><a>Open Blue Ocean</a></li>
        <li><svg><use href="#restart"/></svg><a>Restart from Stage</a></li>
        <li><svg><use href="#replay"/></svg><a>Replay</a></li>
        <li><svg><use href="#gear"/></svg><a>Pipeline Steps</a></li>
        <li><svg><use href="#blueFolder"/></svg><a>Workspaces</a></li>
        <li><svg><use href="#leftArrow"/></svg><a>Previous Build</a></li>
        <li><svg><use href="#rightArrow"/></svg><a>Next Build</a></li>
      </ul>
      <section class="content">
        <h1>Build #188</h1>
        <div class="panel">
          <h2>Parameters</h2>
          <div class="fields">
            <div class="field"><label>FUNCTION_CONTEXT</label><div class="value">nows</div><p>context</p></div>
            <div class="field"><label>ARTIFACT_GROUP_ID</label><div class="value">uk.gov.moj.cpp.azure.legalaidagency</div><p>groupId</p></div>
            <div class="field"><label>ARTIFACT_VERSION</label><div class="value">7.0.185</div><p>Artifact version to be deployed 1.0.0</p></div>
            <div class="field"><label>AZURE_PAAS_RG</label><div class="value">RG-STE-CCP0105-HEARINGRES</div><p>Azure paas resource group</p></div>
            <div class="field"><label>AZURE_PAAS_APP</label><div class="value">fa-ste-ccp0105-nowsce</div><p>Function App Name</p></div>
            <div class="field"><label>AZURE_SLOT</label><div class="value"></div><p>Function App slot for publishing function</p></div>
            <div class="field"><label>ANSIBLE_VIRT_ENV</label><div class="value">ansible2.8</div><p>Version of ansible to use</p></div>
            <div class="field"><label>SLAVE_LABEL</label><div class="value">swarm</div><p>Slave label to run on - swarm (ie vm) or container</p></div>
          </div>
        </div>
      </section>
    </div>

    <footer class="foot"><span>Page generated: 17-Aug-2023 08:21:44 UTC</span><a>Jenkins ver. 2.190.1</a></footer>
  </main>

  <div class="dock">
    <div class="app on"><svg viewBox="0 0 112 112"><rect x="12" y="12" width="88" height="88" rx="20" fill="#dfe6ee"/><path d="M60 12H32Q12 12 12 32V80Q12 100 32 100H67Q62 84 62 64H50Q50 36 60 12Z" fill="url(#gFinder)"/><path d="M36 38v7M77 38v7" stroke="#1b2f45" stroke-width="3.500" stroke-linecap="round"/><path d="M30 71Q56 92 82 71" fill="none" stroke="#16202c" stroke-width="3" stroke-linecap="round"/></svg></div>
    <div class="app"><svg viewBox="0 0 112 112"><rect x="12" y="12" width="88" height="88" rx="20" fill="#b4b5b9"/><g><rect x="27" y="27" width="16" height="16" rx="4" fill="#7ddb55"/><rect x="48" y="27" width="16" height="16" rx="4" fill="#f1bf45"/><rect x="69" y="27" width="16" height="16" rx="4" fill="#e88e35"/><rect x="27" y="48" width="16" height="16" rx="4" fill="#cf3428"/><rect x="48" y="48" width="16" height="16" rx="4" fill="#9ba1a6"/><rect x="69" y="48" width="16" height="16" rx="4" fill="#e84f62"/><rect x="27" y="69" width="16" height="16" rx="4" fill="#9049cf"/><rect x="48" y="69" width="16" height="16" rx="4" fill="#3f8cf0"/><rect x="69" y="69" width="16" height="16" rx="4" fill="#67c9a0"/></g></svg></div>
    <div class="app"><svg viewBox="0 0 112 112"><path d="M12 16 83 5 98 93 26 105Z" fill="#f7f7f7"/><path d="M12 16 83 5 86 22 15 32Z" fill="#f09a37"/><text x="20" y="27" transform="rotate(-9 20 27)" font-family="Liberation Sans, sans-serif" font-size="12" fill="#fff" textLength="32" lengthAdjust="spacingAndGlyphs">PAGES</text><path d="M23 36 56 31 60 57 27 62Z" fill="#38a0ea"/><path d="M34 40l9 3 8-5-3 16-8 2Z" fill="#f2902f"/><path d="M62 35l22-3M63 41l22-3M64 47l22-3M65 53l22-3M28 68l60-8M29 74l60-8M30 80l60-8M31 88l60-8M32 94l50-7" stroke="#a9a9a9" stroke-width="1.600"/><path d="M89 5 96 8 80 80 71 78Z" fill="#ee9a2e"/><path d="M73 70l9 2-5 24-8-2Z" fill="#3a3a3c"/><path d="M69 92l7 2-8 11Z" fill="#c9d4dc"/></svg></div>
    <div class="app"><svg viewBox="0 0 112 112"><use href="#chromeLogo" x="8" y="8" width="96" height="96"/></svg></div>
    <div class="app"><svg viewBox="0 0 112 112"><rect x="13.500" y="13.500" width="85" height="85" rx="19" fill="#000" stroke="url(#gBezel)" stroke-width="3"/><rect x="22" y="22" width="68" height="68" rx="11" fill="#272727"/><path d="M28 28l8 7-8 7M40 45h13" fill="none" stroke="#fff" stroke-width="3"/></svg></div>
    <div class="app"><svg viewBox="0 0 112 112"><rect x="13.500" y="13.500" width="85" height="85" rx="19" fill="#000" stroke="url(#gBezel)" stroke-width="3"/><rect x="22" y="22" width="68" height="68" rx="11" fill="#131c20"/><text x="25" y="43" font-family="Liberation Mono, monospace" font-size="20" fill="#6fdc4f">$</text><rect x="38" y="27" width="10" height="18" fill="#2f6f22"/></svg></div>
    <div class="app on"><svg viewBox="0 0 112 112"><rect x="12" y="12" width="88" height="88" rx="20" fill="#fdfdfd"/><g stroke-width="12" stroke-linecap="round"><path d="M64 31v16" stroke="#55b07f"/><path d="M31 48h16" stroke="#65c3ea"/><path d="M48 65v16" stroke="#cd2f5a"/><path d="M65 65h16" stroke="#e3b24b"/></g><path d="M48 25q6 0 6 6v6h-6a6 6 0 0 1 0-12Z" fill="#65c3ea"/><path d="M74 54V47a6 6 0 1 1 7 7Z" fill="#55b07f"/><path d="M37 59v6a6 6 0 1 1-6-6Z" fill="#cd2f5a"/><path d="M58 75h6a6 6 0 1 1-6 6Z" fill="#e3b24b"/></svg><b class="badge">•</b></div>
    <div class="app"><svg><use href="#quest"/></svg></div>
    <div class="app on"><svg viewBox="0 0 112 112"><path d="M9 35 17 31 82 83 78 104Z" fill="#3c8fd8"/><path d="M9 72 17 81 82 30 78 8Z" fill="#2b71b3"/><path d="M9 35 17 31 60 65 78 104Z" fill="#3a8bd2"/><path d="M78 8 104 20V93L78 104Z" fill="#4ba9ee"/></svg></div>
    <div class="app on"><svg viewBox="0 0 112 112"><rect x="14" y="14" width="85" height="85" fill="url(#gIJ)"/><rect x="25" y="25" width="63" height="63" fill="url(#gIJin)"/><text x="31" y="57" font-family="Liberation Mono, monospace" font-weight="700" font-size="32" fill="#fff">IJ</text><rect x="33" y="75" width="22" height="4" fill="#fff"/></svg></div>
    <div class="app"><svg><use href="#quest"/></svg></div>
    <div class="app on"><svg viewBox="0 0 112 112"><rect x="12" y="12" width="88" height="88" rx="20" fill="#4a4a4a"/><path d="M33 42 80 25V42L61 49 80 55V72L33 87V70L52 63 33 57Z" fill="#f29c38"/><path d="M52 63 80 72V55L61 49Z" fill="#ef9430"/></svg></div>
    <div class="app on"><svg viewBox="0 0 112 112"><rect x="12" y="12" width="88" height="88" rx="20" fill="#f5f5f5"/><use href="#chromeLogo" x="18" y="18" width="76" height="76"/></svg></div>
    <div class="app"><svg><use href="#quest"/></svg></div>
    <div class="app on"><svg viewBox="0 0 112 112"><circle cx="56" cy="56" r="45.500" fill="url(#gAtom)" stroke="#e6e8e6" stroke-width="3.500"/><g fill="none" stroke="#fff" stroke-width="2.600"><ellipse cx="56" cy="56" rx="11" ry="29" transform="rotate(-24 56 56)"/><ellipse cx="56" cy="56" rx="11" ry="29" transform="rotate(28 56 56)"/><ellipse cx="56" cy="56" rx="30" ry="11" transform="rotate(8 56 56)"/></g><circle cx="56" cy="56" r="4" fill="#fff"/></svg></div>
    <div class="app"><svg><use href="#quest"/></svg></div>
    <div class="app on"><svg viewBox="0 0 112 112"><rect x="12" y="12" width="88" height="88" rx="20" fill="#fff"/><circle cx="56" cy="35" r="9" fill="#7b83eb"/><circle cx="76" cy="38" r="6.500" fill="#505ac9"/><path d="M66 48h20v18q-3 11-14 9Z" fill="#505ac9"/><path d="M42 48h29v24q-2 13-15 13T42 70Z" fill="#7b83eb"/><rect x="22" y="39" width="33" height="32" rx="3" fill="#464eb8"/><path d="M31 48h15M38.500 48v17" stroke="#fff" stroke-width="3.600"/></svg></div>
    <div class="app on"><svg viewBox="0 0 112 112"><circle cx="56" cy="56" r="47.500" fill="url(#gSource)"/><circle cx="56" cy="52" r="14" fill="none" stroke="#fff" stroke-width="13"/><path d="M50 58h13v26H50Z" fill="#fff"/><circle cx="56" cy="52" r="7" fill="#2260e4"/></svg></div>
    <div class="app"><svg><use href="#quest"/></svg></div>
    <div class="app on"><svg viewBox="0 0 112 112"><circle cx="56" cy="56" r="47.500" fill="url(#gEle)"/><path d="M19 52Q22 34 50 31V20L63 31Q86 24 92 50 93 60 98 66 92 68 89 62 84 60 82 68 84 78 88 84 80 87 77 74L72 68 68 84H56V70Q46 70 42 84H25Z" fill="#fff"/><path d="M51 32Q48 50 66 54" fill="none" stroke="#3a9bf0" stroke-width="2.500"/><circle cx="80" cy="44" r="2.500" fill="#3a8bea"/></svg></div>
    <div class="app"><svg viewBox="0 0 112 112"><rect x="12" y="12" width="88" height="88" rx="20" fill="#f7f7f7"/><path d="M23 34 56 21V91L23 77V68l6-3-6-5V50l6-3-6-5Z" fill="#a42e27"/><path d="M23 35 56 21 66 26V84L56 91V64L23 50l6-3Z" fill="#c6433a"/><path d="M68 34l9 4V80l-9 5ZM80 44l10 5V72l-10 6Z" fill="#a83029"/></svg></div>
    <div class="app"><svg viewBox="0 0 112 112"><rect x="12" y="12" width="88" height="88" rx="20" fill="#ee7548"/><circle cx="77" cy="36" r="7.500" fill="#fff"/><path d="M70 39 45 60 47 66 29 81 30 84 39 83 52 66 70 55 76 44Z" fill="#fff"/><path d="M48 60l23-15M71 37l10 1" stroke="#ee7548" stroke-width="1.500"/></svg></div>
    <i class="sep"></i>
    <div class="app on"><svg viewBox="0 0 112 112"><circle cx="36" cy="34" r="29" fill="#3074a8"/><circle cx="77" cy="78" r="28" fill="#3074a8"/><circle cx="56" cy="56" r="44" fill="#3074a8"/><circle cx="38" cy="36" r="21" fill="#fff"/><circle cx="74" cy="76" r="21" fill="#fff"/><circle cx="56" cy="56" r="36" fill="#fff"/><path d="M74 42Q71 31 56 31 39 32 40 43 41 52 56 55 73 58 73 69 73 81 56 81 41 81 38 68" fill="none" stroke="#3074a8" stroke-width="11" stroke-linecap="round"/></svg><b class="badge">X</b></div>
    <div class="app on"><svg viewBox="0 0 112 112"><rect x="12" y="12" width="88" height="88" rx="20" fill="#fff"/><path d="M56 23C36 23 22 37 22 56q0 16 13 25V90l10-4q5 2 11 2 34-2 34-32T56 23Z" fill="url(#gMsg)"/><path d="M35 67 50 48 61 57 76 46 62 66 51 57Z" fill="#fff"/></svg></div>
    <div class="app"><svg viewBox="0 0 112 112"><rect x="12" y="12" width="88" height="88" rx="20" fill="url(#gCanva)"/><text x="19" y="64" font-family="Liberation Serif, serif" font-style="italic" font-weight="700" font-size="29" fill="#fff" textLength="74" lengthAdjust="spacingAndGlyphs">Canva</text></svg></div>
    <div class="app on"><svg viewBox="0 0 112 112"><circle cx="56" cy="65" r="40" fill="#fafafa"/><path d="M36 45h19v19H36Z" fill="#df5b3e"/><path d="M57 45h19v19H57Z" fill="#8fb43f"/><path d="M36 66h19v19H36Z" fill="#4ea4e8"/><path d="M57 66h19v19H57Z" fill="#f4b94c"/><path d="M48 4h16v15h9L56 40 36 19h12Z" fill="#7bb963"/></svg><b class="badge">4</b></div>
    <div class="app on"><svg viewBox="0 0 112 112"><path d="M12 2H60L98 40V109H12Z" fill="#4a4b4d"/><path d="M15 6H58L95 43V106H15Z" fill="#f6f6f6" stroke="#c4c4c4" stroke-width="3"/><path d="M71 2H95q4 0 4 4V30Z" fill="#5c5c5e"/></svg></div>
    <i class="sep"></i>
    <div class="app"><svg viewBox="0 0 112 112"><path d="M19 16 28 4 44 3 54 8 66 4 80 12 90 10 94 20 80 32H30Z" fill="#e7e7e7"/><path d="M40 22l12-12 8 4-6 14ZM62 24l6-16 12 8-6 10Z" fill="#8f7f78"/><path d="M48 14l8-2-2 8Z" fill="#49b56a"/><path d="M64 12l10 2-2 8-8-2Z" fill="#3b68b0"/><path d="M18 14Q56 38 94 16L84 92Q82 104 56 104T28 92Z" fill="url(#gTrash)"/></svg></div>
  </div>
</div>
</body>
</html>
```
FILE: styles.css
```css
* { box-sizing: border-box; }
body { margin: 0; font-family: "Liberation Sans", Arial, sans-serif; }
.defs { position: absolute; width: 0; height: 0; }
svg { display: block; flex: none; }

.desktop { position: relative; width: 3584px; height: 2240px; overflow: hidden; background: #090b10; }
.wallpaper { position: absolute; left: 0; bottom: 0; width: 3584px; height: 200px; }

/* macOS menu bar */
.menubar { position: relative; display: flex; align-items: center; height: 48px; background: #b9c8d9; color: #1b1e21; font: 26px/48px Inter, sans-serif; }
.apple { width: 28px; height: 34px; margin: 0 39px 4px 39px; }
.menus { display: grid; grid-template-columns: 143px 83px 88px 99px 130px 175px 132px 85px 137px 80px; width: 1152px; white-space: nowrap; height: 50px; }
.status { display: grid; grid-template-columns: 76px 76px 84px 70px 84px 86px 72px 64px 70px 78px 84px 56px 74px 60px 68px; justify-items: center; align-items: center; margin-left: 948px; height: 48px; }
.clock { display: flex; gap: 20px; margin-left: 12px; white-space: nowrap; height: 50px; letter-spacing: .2px; }

.backwindow { position: absolute; left: 0; top: 50px; width: 3584px; height: 2038px; border-radius: 20px; overflow: hidden; display: flex; flex-direction: column; background: linear-gradient(90deg, #6b6b6b, #343434 60px, #343434 3500px, #7a7a7a); }
.backwindow i { width: 18px; }
.teal { height: 84px; background: #63a5a9; }
.pale { height: 150px; background: linear-gradient(#8aa9a8, #9bb5b3); }
.rest { height: 1770px; background: linear-gradient(90deg, #36393b 2px, #16181a 2px); }

/* browser window */
.window { position: absolute; left: 18px; top: 50px; width: 3566px; height: 2026px; display: flex; flex-direction: column; border-radius: 20px; overflow: hidden; background: #fff; box-shadow: 0 0 0 1px #000, 0 14px 50px rgba(0,0,0,.6); }
.tabstrip { display: flex; align-items: center; height: 84px; padding-top: 16px; border-top: 2px solid #8c5d5a; background: #5a2322; }
.lights { display: flex; flex: none; gap: 16px; width: 187px; padding: 0 0 14px 42px; }
.lights i { width: 24px; height: 24px; border-radius: 50%; }
.lights .red { background: #ed6a5e; }
.lights .yellow { background: #f4bf4f; }
.lights .green { background: #61c554; }
.tab { position: relative; display: flex; flex: none; align-items: center; width: 240px; height: 68px; padding-left: 23px; color: #fff; font: 24px/32px Inter, sans-serif; }
.tab.wide { width: 242px; }
.tab svg { width: 32px; height: 32px; }
.tab span { width: 116px; margin-left: 16px; white-space: nowrap; letter-spacing: -.5px; -webkit-mask-image: linear-gradient(90deg, #000 60%, transparent); mask-image: linear-gradient(90deg, #000 60%, transparent); }
.tab .x { width: 20px; height: 20px; margin-left: 14px; }
.tab::after { content: ""; position: absolute; right: 0; top: 14px; width: 2px; height: 40px; background: #8b6463; }
.tab.bare::after { display: none; }
.tab.active { background: #8c3634; border-radius: 16px 16px 0 0; }
.tab.active::before, .tab.active::after { content: ""; position: absolute; top: auto; bottom: 0; width: 16px; height: 16px; background: radial-gradient(circle at 0 0, transparent 15.5px, #8c3634 16px); }
.tab.active::before { left: -16px; }
.tab.active::after { right: -16px; background: radial-gradient(circle at 100% 0, transparent 15.5px, #8c3634 16px); }
.dot { position: absolute; left: 45px; top: 18px; width: 11px; height: 11px; border-radius: 50%; background: #d8423a; }
.plus { width: 26px; height: 26px; margin-left: 32px; }
.chev { width: 20px; height: 14px; margin-left: 133px; }

.toolbar { display: flex; align-items: center; height: 84px; background: #8c3634; }
.nav { width: 28px; height: 28px; margin-left: 30px; margin-right: 7px; }
.reload { margin-left: 28px; margin-right: 9px; }
.omnibox { display: flex; flex: none; align-items: center; width: 2942px; height: 68px; margin-left: 21px; border-radius: 34px; background: #6b302f; font: 27.6px/34px Inter, sans-serif; color: #cfb3b2; }
.warn { width: 24px; height: 22px; margin-left: 24px; }
.insecure { flex: none; width: 165px; margin-left: 19px; border-right: 2px solid #9c706f; color: #f0a9a3; white-space: nowrap; }
.url { flex: none; width: 2579px; margin-left: 18px; white-space: nowrap; letter-spacing: .25px; }
.url s { color: #f0a9a3; }
.url em { font-style: normal; }
.url b { font-weight: 400; color: #fff; }
.share { width: 24px; height: 32px; }
.star { width: 30px; height: 30px; margin-left: 37px; }
.extensions { display: grid; grid-template-columns: 60px 64px 68px 60px 68px 64px; justify-items: center; align-items: center; margin-left: 14px; }
.extensions svg { width: 32px; height: 32px; }
.avatar { width: 44px; height: 44px; border-radius: 50%; background: #d94a7c; color: #fff; font: 24px/44px Inter, sans-serif; text-align: center; }

.bookmarks { display: flex; height: 66px; padding: 0 0 0 28px; gap: 33px; background: #8c3634; border-bottom: 2px solid #a86360; color: #fff; font: 24px/56px Inter, sans-serif; white-space: nowrap; letter-spacing: -.04px; }
.bookmarks a { display: flex; align-items: center; height: 56px; gap: 16px; }
.bookmarks svg { width: 32px; height: 32px; }
.bookmarks .f { height: 26px; }

/* Jenkins header */
.jenkins-head { display: flex; height: 80px; background: #000; }
.logo { width: 64px; height: 72px; margin: 8px 0 0 37px; }
.brand { flex: none; width: 2697px; padding: 2px 0 0 11px; font: bold 55px/72px "DejaVu Serif", Georgia, serif; letter-spacing: -.3px; color: #fff; }
.alerts { flex: none; width: 81px; background: #cc3329; color: #fff; font-weight: 700; font-size: 38px; line-height: 82px; text-align: center; }
.search { display: flex; align-items: center; width: 540px; height: 48px; margin: 12px 0 0 22px; padding-left: 6px; border-radius: 8px; background: #fff; box-shadow: inset 0 0 6px rgba(0,0,0,.45); color: #777; font-size: 28px; }
.search svg { width: 34px; height: 34px; }
.search span { margin-left: 2px; }
.help { width: 32px; height: 32px; margin: 23px 0 0 8px; }
.crumbs { display: flex; align-items: center; height: 56px; padding: 2px 56px 0 37px; border-bottom: 2px solid #d3d5cf; background: #f7faf3; color: #575a55; font-size: 28px; white-space: nowrap; }
.crumbs i { margin: 0 33.2px 0 43px; border-left: 9px solid #b9bab8; border-top: 7px solid transparent; border-bottom: 7px solid transparent; }
.crumbs a { margin-left: auto; color: #204a87; font-size: 18px; text-decoration: underline; }

.page { display: flex; height: 1569px; }
.tasks { width: 750px; margin: 0; padding: 26px 0 0 34px; list-style: none; }
.tasks li { display: flex; align-items: center; height: 64px; }
.tasks svg { width: 48px; height: 48px; }
.tasks a { margin-left: 12px; padding-bottom: 4px; color: #204a87; font-size: 28px; line-height: 36px; white-space: nowrap; }
.tasks .seen a { color: #5c3566; }
.tasks .current a { font-weight: 700; }

.content { width: 2786px; }
h1 { margin: 0; padding-top: 54px; height: 144px; color: #333; font-size: 56px; line-height: 66px; }
.panel { height: 1288px; border: 2px solid #eee; border-radius: 8px; overflow: hidden; }
h2 { height: 73px; margin: 0; padding-left: 30px; background: #eee; color: #333; font-size: 28px; line-height: 72px; }
.fields { padding: 8px 0 0 32px; }
.field { display: grid; grid-template-columns: 312px 2354px; grid-template-rows: 68px 72.5px; color: #333; }
.field label { font-size: 28px; line-height: 67px; white-space: nowrap; }
.value { padding-left: 13px; border: 2px solid #ccc; border-radius: 6px; box-shadow: inset 0 2px 3px rgba(0,0,0,.1); color: #000; font-size: 28px; line-height: 64px; }
.field p { grid-column: 2; margin: 0; padding-top: 29px; font-size: 22.4px; line-height: 28px; }

.foot { display: flex; justify-content: flex-end; height: 87px; padding: 28px 30px 0 0; gap: 30px; border-top: 2px solid #d3d5cf; background: linear-gradient(#f7faf3 30%, #e1e4dd); color: #333; font-size: 24px; line-height: 28px; }
.foot a { color: #204a87; text-decoration: underline; text-underline-offset: 4px; }

/* dock */
.dock { position: absolute; left: 100px; top: 2092px; width: 3388px; height: 138px; display: flex; padding-left: 2px; border: 2px solid #48494d; border-radius: 40px; background: linear-gradient(90deg, #1d1f25, #1c1e23 75%, #2d2526 92%, #33272a); }
.app { position: relative; flex: none; width: 116.67px; height: 134px; display: flex; flex-direction: column; align-items: center; padding-top: 6px; }
.app svg { width: 112px; height: 112px; }
.app.on::after { content: ""; width: 8px; height: 8px; margin-top: 6px; border-radius: 50%; background: #a4a4aa; }
.badge { position: absolute; left: 75px; top: 7px; width: 41px; height: 41px; border-radius: 50%; background: #dd493c; color: #fff; font: 24px/41px Inter, sans-serif; text-align: center; }
.sep { flex: none; width: 2px; height: 102px; margin: 16px 25px 0; background: #57575b; }
```
